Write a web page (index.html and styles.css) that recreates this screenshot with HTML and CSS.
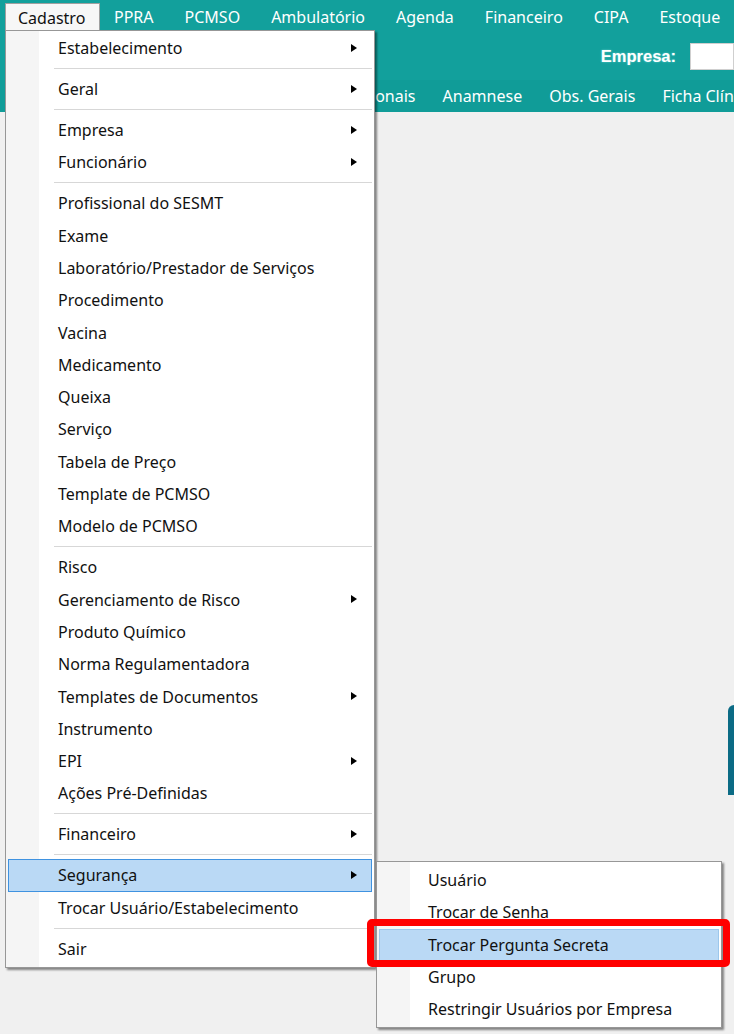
FILE: index.html
```html
<!DOCTYPE html>
<html>
<head>
<meta charset="utf-8">
<link rel="stylesheet" href="styles.css">
</head>
<body>
<div class="header">
  <div class="menubar">
    <span class="mb-item active">Cadastro</span>
    <span class="mb-item">PPRA</span>
    <span class="mb-item">PCMSO</span>
    <span class="mb-item">Ambulatório</span>
    <span class="mb-item">Agenda</span>
    <span class="mb-item">Financeiro</span>
    <span class="mb-item">CIPA</span>
    <span class="mb-item">Estoque</span>
  </div>
  <div class="toolbar">
    <span class="emp-label">Empresa:</span>
    <span class="emp-input"></span>
  </div>
  <div class="tabs">
    <span class="tab">Ocupacionais</span>
    <span class="tab">Anamnese</span>
    <span class="tab">Obs. Gerais</span>
    <span class="tab">Ficha Clínica</span>
  </div>
</div>
<div class="content"></div>
<div class="logo-edge"></div>

<div class="menu main-menu">
  <div class="mi sub">Estabelecimento</div>
  <div class="sep"></div>
  <div class="mi sub">Geral</div>
  <div class="sep"></div>
  <div class="mi sub">Empresa</div>
  <div class="mi sub">Funcionário</div>
  <div class="sep"></div>
  <div class="mi">Profissional do SESMT</div>
  <div class="mi">Exame</div>
  <div class="mi">Laboratório/Prestador de Serviços</div>
  <div class="mi">Procedimento</div>
  <div class="mi">Vacina</div>
  <div class="mi">Medicamento</div>
  <div class="mi">Queixa</div>
  <div class="mi">Serviço</div>
  <div class="mi">Tabela de Preço</div>
  <div class="mi">Template de PCMSO</div>
  <div class="mi">Modelo de PCMSO</div>
  <div class="sep"></div>
  <div class="mi">Risco</div>
  <div class="mi sub">Gerenciamento de Risco</div>
  <div class="mi">Produto Químico</div>
  <div class="mi">Norma Regulamentadora</div>
  <div class="mi sub">Templates de Documentos</div>
  <div class="mi">Instrumento</div>
  <div class="mi sub">EPI</div>
  <div class="mi">Ações Pré-Definidas</div>
  <div class="sep"></div>
  <div class="mi sub">Financeiro</div>
  <div class="sep"></div>
  <div class="mi sub hl">Segurança</div>
  <div class="mi">Trocar Usuário/Estabelecimento</div>
  <div class="sep"></div>
  <div class="mi">Sair</div>
</div>

<div class="menu sub-menu">
  <div class="mi">Usuário</div>
  <div class="mi">Trocar de Senha</div>
  <div class="mi hl">Trocar Pergunta Secreta</div>
  <div class="mi">Grupo</div>
  <div class="mi">Restringir Usuários por Empresa</div>
</div>
<div class="red-box"></div>
</body>
</html>
```

FILE: styles.css
```css
* { box-sizing: border-box; }
html, body {
  margin: 0;
  padding: 0;
  width: 734px;
  height: 1034px;
  overflow: hidden;
  background: #f0f0f0;
  font-family: "Noto Sans", "Open Sans", sans-serif;
  font-size: 16px;
  color: #111111;
}
.header {
  background: #12a09c;
  height: 112px;
  display: flex;
  flex-direction: column;
  overflow: hidden;
}
.menubar {
  height: 32px;
  display: flex;
  align-items: stretch;
  padding-left: 5px;
  white-space: nowrap;
  overflow: hidden;
}
.mb-item {
  flex-shrink: 0;
  color: #ffffff;
  padding: 2px 16px 0 14px;
  margin-right: 1px;
  display: flex;
  align-items: center;
}
.mb-item.active {
  background: #f7f7f7;
  color: #111111;
  border: 1px solid #a0a0a0;
  border-bottom: none;
  margin-top: 3px;
  margin-right: 0;
  padding: 0 0 0 12px;
  width: 95px;
}
.toolbar {
  height: 48px;
  display: flex;
  justify-content: flex-end;
  align-items: center;
}
.emp-label {
  color: #fff;
  font-weight: bold;
  font-family: "Liberation Sans", sans-serif;
  font-size: 16.5px;
  letter-spacing: 0;
  text-shadow: 0 0 2px #6cd2cf;
  margin-right: 14px;
}
.emp-input {
  flex-shrink: 0;
  width: 44px;
  height: 27px;
  background: #fff;
  border: 1px solid #cfcfcf;
}
.tabs {
  height: 32px;
  display: flex;
  align-items: center;
  padding-left: 301px;
  background: #109c98;
  white-space: nowrap;
  overflow: hidden;
}
.tab {
  flex-shrink: 0;
  color: #fff;
  padding: 0 13.5px;
}
.content { height: 922px; }
.logo-edge {
  position: absolute;
  left: 728px;
  top: 705px;
  width: 6px;
  height: 90px;
  background: #0b6b85;
  border-radius: 8px 0 0 0;
}
.menu {
  position: absolute;
  border: 1px solid #979797;
  box-shadow: 2px 2px 2px rgba(0,0,0,0.45);
  padding: 1px 2px 2px;
  background: linear-gradient(to right, #f5f5f5 0, #f5f5f5 33px, #ffffff 33px);
}
.main-menu {
  left: 5px;
  top: 30px;
  width: 370px;
}
.sub-menu {
  left: 376px;
  top: 861px;
  width: 346px;
  padding-top: 2px;
}
.mi {
  height: 32.3px;
  display: flex;
  align-items: center;
  padding-left: 49px;
  position: relative;
  white-space: nowrap;
  border: 1px solid transparent;
}
.sub-menu .mi { padding-left: 48px; }
.mi.sub::after {
  content: "";
  position: absolute;
  right: 14px;
  top: 50%;
  margin-top: -4.5px;
  border-left: 6px solid #000;
  border-top: 4.5px solid transparent;
  border-bottom: 4.5px solid transparent;
}
.mi.hl {
  background: #bad9f5;
  border-color: #3f92e0;
}
.sub-menu .mi.hl { border-color: #9cc7ec; }
.sep {
  height: 8.7px;
  margin-left: 46px;
  display: flex;
  align-items: center;
}
.sep::before {
  content: "";
  display: block;
  width: 100%;
  height: 1px;
  background: #d7d7d7;
}
.red-box {
  position: absolute;
  left: 367px;
  top: 919px;
  width: 363px;
  height: 48px;
  border: 7px solid #ff0000;
  border-radius: 5px;
}
```
